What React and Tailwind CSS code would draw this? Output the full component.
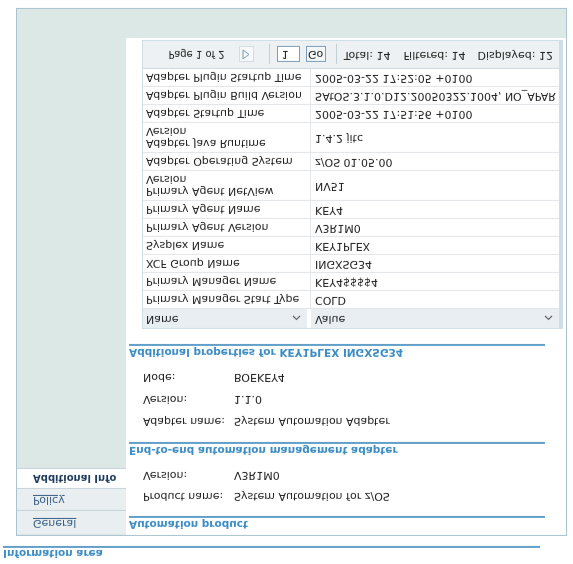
import React from "react";

// table rows, top to bottom as the page is laid out (before the flip)
const rows = [
  ["Primary Manager Start Type", "COLD"],
  ["Primary Manager Name", "KEY4$$$$4"],
  ["XCF Group Name", "INGXSG34"],
  ["Sysplex Name", "KEY1PLEX"],
  ["Primary Agent Version", "V3R1M0"],
  ["Primary Agent Name", "KEY4"],
  ["Primary Agent NetView Version", "NV51", true],
  ["Adapter Operating System", "z/OS 01.05.00"],
  ["Adapter Java Runtime Version", "1.4.2 jitc", true],
  ["Adapter Startup Time", "2005-03-22 17:51:56 +0100"],
  ["Adapter Plugin Build Version", "SAtOS.3.1.0.D12.20050322.1004, NO_APAR"],
  ["Adapter Plugin Startup Time", "2005-03-22 17:52:05 +0100"],
];

function Heading({ children }) {
  return (
    <div className="w-[416px] ml-[3px] border-b-2 border-[#63a0c9] text-[#3d8dc4] text-[10.5px] font-bold leading-[13px]">
      {children}
    </div>
  );
}

function Prop({ label, value, h }) {
  return (
    <div className={`flex items-center pl-[17px] ${h}`}>
      <span className="w-[91px]">{label}</span>
      <span>{value}</span>
    </div>
  );
}

function Chevron() {
  return (
    <svg width="9" height="6" viewBox="0 0 9 6" className="mr-[6px]">
      <path d="M1 5 L4.5 1.5 L8 5" fill="none" stroke="#666" strokeWidth="1.2" />
    </svg>
  );
}

export default function App() {
  return (
    <div className="w-[573px] h-[564px] bg-white overflow-hidden">
      {/* whole page is shown upside down */}
      <div className="-scale-y-100 w-full h-full font-['DejaVu_Sans',sans-serif] text-[11px] text-[#222]">
        <div className="pt-[4px] pl-[3px]">
          <div className="w-[537px] border-b-2 border-[#63a0c9] text-[#3d8dc4] text-[10.5px] font-bold leading-[12px]">
            Information area
          </div>
        </div>

        <div className="ml-[16px] mt-[10px] w-[551px] h-[528px] border border-[#a9c3cf] flex flex-col">
          <div className="flex flex-1">
            {/* sidebar */}
            <div className="w-[109px] bg-[#dce8e5] flex flex-col">
              <div className="mt-[1px] h-[24px] flex items-center pl-[16px] bg-[#e9eef0] border-b border-[#c8d4da]">
                <span className="underline text-[#3a5f85]">General</span>
              </div>
              <div className="h-[22px] flex items-center pl-[16px] bg-[#e9eef0] border-b border-[#c8d4da]">
                <span className="underline text-[#3a5f85]">Policy</span>
              </div>
              <div className="h-[20px] flex items-center pl-[16px] bg-white border-b border-[#c8d4da]">
                <span className="font-bold text-[10px] text-[#1e3a5c]">Additional Info</span>
              </div>
            </div>

            {/* content */}
            <div className="flex-1 bg-white">
              <div className="mt-[4px]">
                <Heading>Automation product</Heading>
              </div>
              <div className="mt-[10px]">
                <Prop label="Product name:" value="System Automation for z/OS" h="h-[21px]" />
                <Prop label="Version:" value="V3R1M0" h="h-[21px]" />
              </div>

              <div className="mt-[7px]">
                <Heading>End-to-end automation management adapter</Heading>
              </div>
              <div className="mt-[10px]">
                <Prop label="Adapter name:" value="System Automation Adapter" h="h-[22px]" />
                <Prop label="Version:" value="1.1.0" h="h-[22px]" />
                <Prop label="Node:" value="BOEKEY4" h="h-[22px]" />
              </div>

              <div className="mt-[7px]">
                <Heading>Additional properties for KEY1PLEX INGXSG34</Heading>
              </div>

              {/* properties table */}
              <div className="mt-[15px] ml-[16px] w-[421px] border border-r-4 border-[#cfdfe7]">
                <div className="flex h-[19px] bg-white">
                  <div className="w-[164px] flex items-center justify-between pl-[3px] bg-[#e8eef1]">
                    <span>Name</span>
                    <Chevron />
                  </div>
                  <div className="w-[4px]" />
                  <div className="flex-1 flex items-center justify-between pl-[4px] bg-[#e8eef1]">
                    <span>Value</span>
                    <Chevron />
                  </div>
                </div>
                {rows.map(([name, value, tall]) => (
                  <div
                    key={name}
                    className={`flex border-t border-[#e2e6e8] ${tall ? "h-[30px]" : "h-[18px]"}`}
                  >
                    <div className="w-[168px] border-r border-[#e2e6e8] pl-[3px] flex items-center leading-[12px]">
                      {tall ? (
                        <span>
                          {name.split(" ").slice(0, -1).join(" ")}
                          <br />
                          {name.split(" ").slice(-1)}
                        </span>
                      ) : (
                        name
                      )}
                    </div>
                    <div className="flex-1 pl-[4px] flex items-center whitespace-nowrap">{value}</div>
                  </div>
                ))}
                <div className="h-[28px] bg-[#edf1f3] border-t border-[#cfdbe1] flex items-center justify-end pr-[6px]">
                  <span className="text-[10px]">Page 1 of 2</span>
                  <div className="ml-[14px] w-[15px] h-[16px] bg-[#f6f8f9] border border-[#d3dde2] flex items-center justify-center">
                    <svg width="8" height="11" viewBox="0 0 8 11">
                      <path d="M1 1 L7 5.5 L1 10 Z" fill="none" stroke="#7d9bb3" strokeWidth="1" />
                    </svg>
                  </div>
                  <div className="w-px h-[20px] bg-[#c3ced4] ml-[15px] mr-[7px]" />
                  <div className="w-[23px] h-[16px] border border-[#7f9db9] bg-white pl-[4px] leading-[14px]">1</div>
                  <div className="ml-[6px] w-[20px] h-[16px] border border-[#7f9db9] bg-[#f4f7f8] text-center leading-[14px]">
                    Go
                  </div>
                  <div className="w-px h-[20px] bg-[#c3ced4] ml-[10px] mr-[7px]" />
                  <span>Total: 14</span>
                  <span className="ml-[13px]">Filtered: 14</span>
                  <span className="ml-[12px]">Displayed: 12</span>
                </div>
              </div>
            </div>
          </div>
          <div className="h-[29px] bg-[#dce8e5]" />
        </div>
      </div>
    </div>
  );
}
